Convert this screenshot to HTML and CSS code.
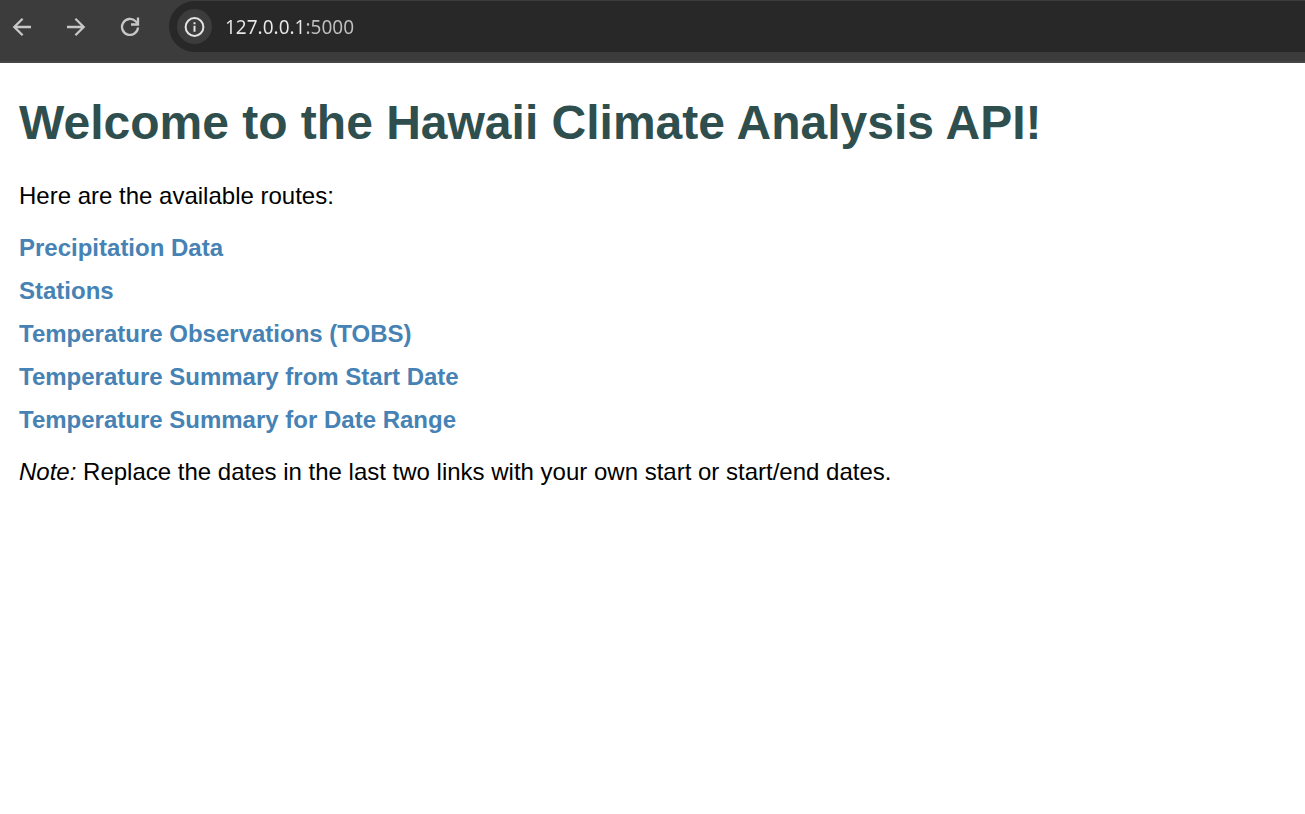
FILE: index.html
```html
<!DOCTYPE html>
<html lang="en">
<head>
<meta charset="utf-8">
<title>Hawaii Climate Analysis API</title>
<link rel="stylesheet" href="styles.css">
</head>
<body>
<header class="toolbar">
  <nav class="controls" aria-label="Browser controls">
    <button class="control" aria-label="Back"><svg viewBox="0 0 22 22"><path d="M19 11H2.500M10.600 2.700L2.300 11l8.300 8.300"/></svg></button>
    <button class="control" aria-label="Forward"><svg viewBox="0 0 22 22"><path d="M1 11h16.500M9.400 2.700l8.300 8.300-8.300 8.300"/></svg></button>
    <button class="control" aria-label="Reload"><svg viewBox="0 0 22 22"><path d="M18 11.500A8 8 0 1 1 15.600 5.200L18 7.500"/><path d="M18 1.500v7h-7"/></svg></button>
  </nav>
  <div class="address">
    <button class="site-info" aria-label="Site information"><svg viewBox="0 0 22 22"><circle cx="10.500" cy="11" r="8.900"/><path d="M10.500 9.700v6M10.500 6.300v2"/></svg></button>
    <input class="url" type="text" aria-label="Address" value="127.0.0.1:5000">
  </div>
</header>
<main class="page">
  <h1 class="title">Welcome to the Hawaii Climate Analysis API!</h1>
  <p class="text">Here are the available routes:</p>
  <ul class="routes">
    <li><a href="#precipitation">Precipitation Data</a></li>
    <li><a href="#stations">Stations</a></li>
    <li><a href="#tobs">Temperature Observations (TOBS)</a></li>
    <li><a href="#start">Temperature Summary from Start Date</a></li>
    <li><a href="#range">Temperature Summary for Date Range</a></li>
  </ul>
  <p class="text"><em>Note:</em> Replace the dates in the last two links with your own start or start/end dates.</p>
</main>
</body>
</html>
```
FILE: styles.css
```css
* { box-sizing: border-box; }
body { margin: 0; background: #fff; color: #000; font-family: "Liberation Sans", Arial, sans-serif; }
button { border: 0; padding: 0; background: none; color: inherit; }
svg { display: block; width: 22px; height: 22px; fill: none; stroke: currentColor; stroke-width: 2.3; }
.toolbar { display: flex; gap: 27px; padding: 1px 0 9px 12px; background: #3c3c3c; color: #c7c7c7; border-bottom: 2px solid #484546; }
.controls { display: flex; align-items: center; gap: 32px; }
.address { flex: 1; display: flex; align-items: center; gap: 13px; padding: 8px 0 8px 8px; background: #282828; border-radius: 26px 0 0 26px; }
.site-info { display: grid; place-items: center; width: 35px; height: 35px; border-radius: 50%; background: #3c3c3c; color: #e3e3e3; }
.site-info svg { stroke-width: 2; }
/* The host is brighter than the port that follows it. */
.url { flex: 1; min-width: 0; padding: 0; border: 0; outline: 0; font: 19px/28px "Noto Sans", sans-serif; color: #e8e8e8; background: linear-gradient(90deg, #e8e8e8 80px, #c0c0c0 80px); -webkit-background-clip: text; background-clip: text; -webkit-text-fill-color: transparent; }
.page { padding: 32px 19px; }
.title { margin: 0 0 32px; font-size: 48px; line-height: 55px; color: #2f4f4f; }
.text { margin: 0; font-size: 24px; line-height: 28px; }
.routes { display: grid; gap: 15px; margin: 24px 0; padding: 0; list-style: none; font-size: 24px; line-height: 28px; font-weight: bold; }
.routes a { color: #4682b4; text-decoration: none; }
```
